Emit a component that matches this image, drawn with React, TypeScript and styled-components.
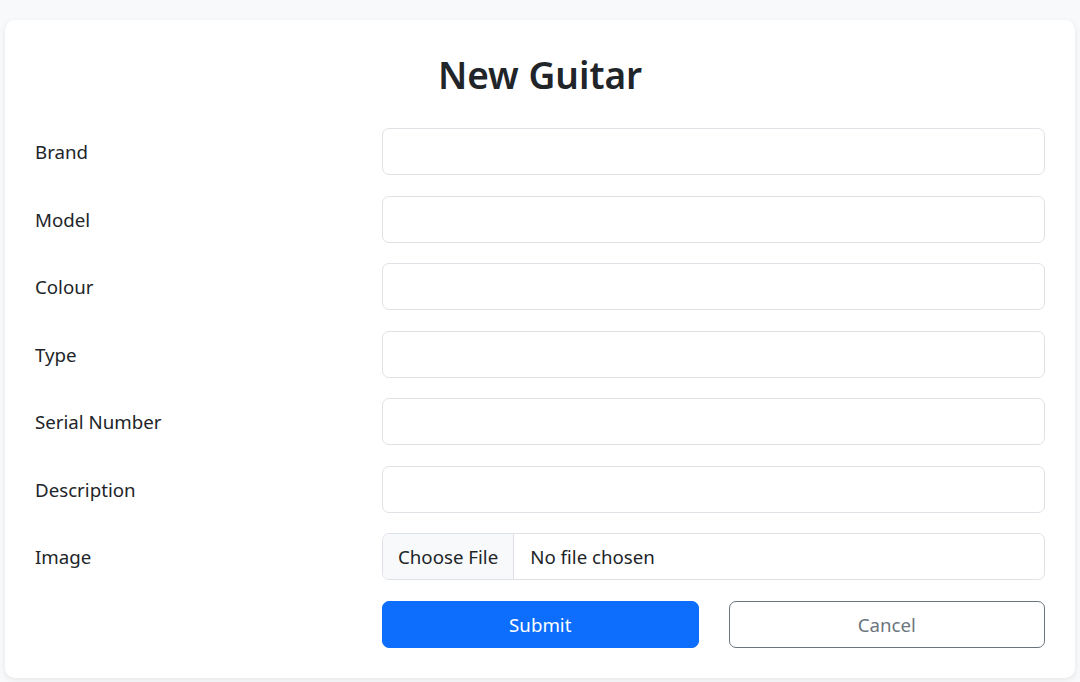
import React from "react";
import styled, { createGlobalStyle } from "styled-components";

const Global = createGlobalStyle`
  * { box-sizing: border-box; }
  html, body { margin: 0; padding: 0; }
  body {
    background: #f8f9fa;
    font-family: "Noto Sans", "Open Sans", sans-serif;
    color: #212529;
  }
`;

const Page = styled.div`
  padding: 20px 5px 4px 5px;
`;

const Card = styled.div`
  background: #fff;
  border-radius: 10px;
  box-shadow: 0 2px 6px rgba(0, 0, 0, 0.08);
  padding: 30px 30px 30px 30px;
`;

const Title = styled.h1`
  margin: 0 0 28px 0;
  text-align: center;
  font-size: 37px;
  line-height: 50px;
  font-weight: 600;
  color: #212529;
`;

const Form = styled.form`
  display: grid;
  grid-template-columns: 347px 1fr;
  row-gap: 20.5px;
`;

const Label = styled.label`
  display: flex;
  align-items: center;
  height: 47px;
  font-size: 18.7px;
  color: #212529;
`;

const Input = styled.input`
  height: 47px;
  width: 100%;
  border: 1px solid #dee2e6;
  border-radius: 7px;
  background: #fff;
  font-family: inherit;
  font-size: 20px;
  padding: 0 16px;
  outline: none;
`;

const FileBox = styled.div`
  height: 47px;
  display: flex;
  align-items: stretch;
  border: 1px solid #dee2e6;
  border-radius: 7px;
  overflow: hidden;
  font-size: 18.7px;
`;

const FileButton = styled.div`
  display: flex;
  align-items: center;
  padding: 0 15px;
  background: #f8f9fa;
  border-right: 1px solid #dee2e6;
  color: #212529;
`;

const FileText = styled.div`
  display: flex;
  align-items: center;
  padding: 0 16px;
  color: #212529;
`;

const Buttons = styled.div`
  grid-column: 2;
  display: grid;
  grid-template-columns: 1fr 1fr;
  column-gap: 30px;
`;

const Button = styled.button<{ $variant: "primary" | "outline" }>`
  height: 47px;
  border-radius: 7px;
  font-family: inherit;
  font-size: 18.7px;
  cursor: pointer;
  background: ${(p) => (p.$variant === "primary" ? "#0d6efd" : "#fff")};
  color: ${(p) => (p.$variant === "primary" ? "#fff" : "#6c757d")};
  border: 1px solid ${(p) => (p.$variant === "primary" ? "#0d6efd" : "#6c757d")};
`;

const fields = ["Brand", "Model", "Colour", "Type", "Serial Number", "Description"];

export default function App() {
  return (
    <>
      <Global />
      <Page>
        <Card>
          <Title>New Guitar</Title>
          <Form onSubmit={(e) => e.preventDefault()}>
            {fields.map((f) => (
              <React.Fragment key={f}>
                <Label>{f}</Label>
                <Input type="text" />
              </React.Fragment>
            ))}
            <Label>Image</Label>
            <FileBox>
              <FileButton>Choose File</FileButton>
              <FileText>No file chosen</FileText>
            </FileBox>
            <Buttons>
              <Button $variant="primary" type="submit">Submit</Button>
              <Button $variant="outline" type="button">Cancel</Button>
            </Buttons>
          </Form>
        </Card>
      </Page>
    </>
  );
}
